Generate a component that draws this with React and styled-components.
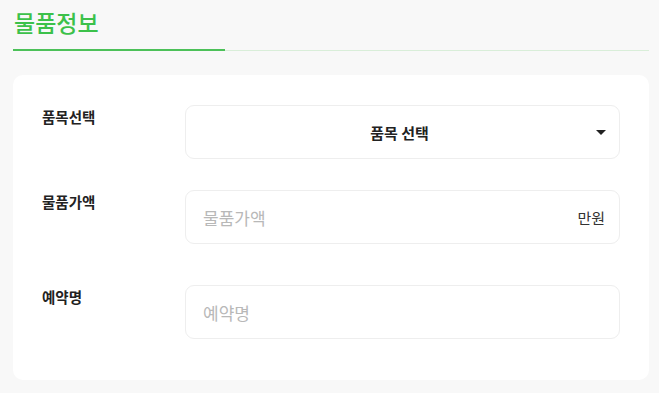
import React from "react";
import styled, { createGlobalStyle } from "styled-components";

const Global = createGlobalStyle`
  html, body { margin: 0; padding: 0; background: #f8f8f8; }
  body { font-family: "Noto Sans CJK KR", "Noto Sans", sans-serif; }
  * { box-sizing: border-box; }
`;

const Page = styled.div`
  padding: 0 10px 0 13px;
  width: 659px;
`;

const Header = styled.div`
  position: relative;
  height: 51px;
  border-bottom: 1px solid #d9eed9;
  display: flex;
  align-items: flex-start;
`;

const Title = styled.h2`
  margin: 5px 0 0 1px;
  font-size: 23px;
  font-weight: 500;
  color: #3cc14a;
  line-height: 34px;
`;

const Accent = styled.div`
  position: absolute;
  left: 0;
  bottom: -1px;
  width: 212px;
  height: 2px;
  background: #4cc159;
`;

const Card = styled.div`
  margin-top: 24px;
  background: #fff;
  border-radius: 10px;
  padding: 30px 29px 41px 29px;
  display: flex;
  flex-direction: column;
`;

const Row = styled.div`
  display: flex;
  align-items: flex-start;
  margin-top: ${(p) => p.$gap || 0}px;
`;

const Label = styled.div`
  width: 143px;
  padding-top: 2px;
  font-size: 14.5px;
  font-weight: 700;
  color: #222;
  line-height: 20px;
`;

const Field = styled.div`
  flex: 1;
  height: 54px;
  border: 1px solid #eeeeee;
  border-radius: 9px;
  display: flex;
  align-items: center;
  padding: 0 13px 0 17px;
`;

const SelectText = styled.div`
  flex: 1;
  text-align: center;
  font-size: 15px;
  font-weight: 700;
  color: #222;
  padding-left: 0;
`;

const Placeholder = styled.div`
  flex: 1;
  font-size: 17px;
  color: #b8b8b8;
`;

const Unit = styled.div`
  font-size: 15px;
  color: #333;
  margin-right: 1px;
`;

const Caret = styled.svg`
  flex: none;
`;

export default function App() {
  return (
    <>
      <Global />
      <Page>
        <Header>
          <Title>물품정보</Title>
          <Accent />
        </Header>
        <Card>
          <Row>
            <Label>품목선택</Label>
            <Field>
              <SelectText>품목 선택</SelectText>
              <Caret width="10" height="5" viewBox="0 0 10 5">
                <path d="M0 0 H10 L5 5 Z" fill="#222" />
              </Caret>
            </Field>
          </Row>
          <Row $gap={31}>
            <Label>물품가액</Label>
            <Field>
              <Placeholder>물품가액</Placeholder>
              <Unit>만원</Unit>
            </Field>
          </Row>
          <Row $gap={41}>
            <Label>예약명</Label>
            <Field>
              <Placeholder>예약명</Placeholder>
            </Field>
          </Row>
        </Card>
      </Page>
    </>
  );
}
